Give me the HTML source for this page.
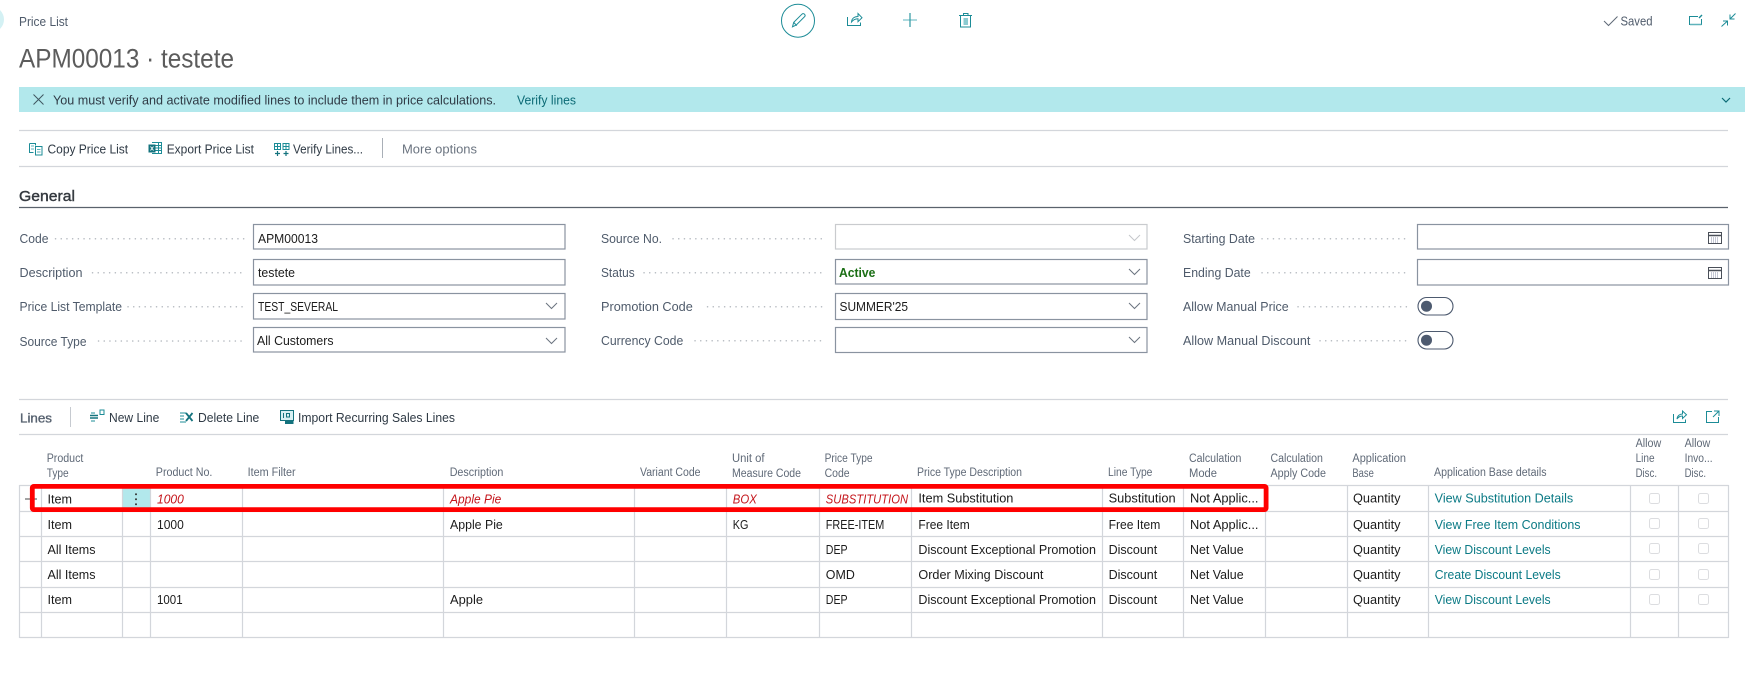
<!DOCTYPE html>
<html lang="en"><head><meta charset="utf-8"><title>Price List</title>
<style>
html,body{margin:0;padding:0;background:#fff;width:1745px;height:685px;overflow:hidden}
svg{display:block;font-family:"Liberation Sans",sans-serif}
text{font-size:12.5px;fill:#1c1c1c;white-space:pre}
.l{fill:#4f5b6b}.h{font-size:11.5px;fill:#5f6977}.a{fill:#2f3a45}.r{fill:#c4161c;font-style:italic}.k{fill:#0b7a85}
.dot{stroke:#b4b9bf;stroke-width:1.5;stroke-dasharray:.1 5.6;stroke-linecap:round;fill:none}
.ic{fill:none;stroke:#1c8c97;stroke-width:1}
.inp{fill:#fff;stroke:#8a93a0;stroke-width:1.2}
.ch{fill:none;stroke:#6b7480;stroke-width:1}
.cb{fill:#fff;stroke:#dcdde0;stroke-width:1}
</style></head><body>
<svg width="1745" height="685" viewBox="0 0 1745 685" xmlns="http://www.w3.org/2000/svg">
<circle cx="-9" cy="19.5" r="13" fill="#d4f1f4"/>
<text x="19" y="26" class="l" textLength="49" lengthAdjust="spacingAndGlyphs">Price List</text>
<text x="19" y="67.5" style="font-size:27px;fill:#5c5c5c" textLength="215" lengthAdjust="spacingAndGlyphs">APM00013 · testete</text>

<!-- top actions -->
<circle cx="798" cy="20.7" r="16.5" fill="none" stroke="#1c8c97" stroke-width="1"/>
<path class="ic" d="M792.5 26.8l1.2-4.4 8.2-8.2c.8-.8 1.9-.8 2.6 0s.8 1.9 0 2.6l-8.2 8.2zM793.7 22.4l3.1 3.2"/>
<path class="ic" d="M847.5 17v8.5h13v-3M851.5 22c.3-3.6 3-5.5 6.5-5.5v-3l4 4.2-4 4v-3c-2.8 0-4.8 1.1-6.5 3.3z"/>
<path fill="none" stroke="#8ccbd1" stroke-width="1.4" d="M903 20h14"/><path fill="none" stroke="#2f97a1" stroke-width="1.2" d="M910 13v14"/>
<path class="ic" d="M959 15.5h13M960.5 15.5v11.5h10v-11.500M963.5 15.5v-2h4.5v2"/><rect x="963.5" y="18" width="4.5" height="7" fill="#8ccbd1"/>
<path fill="none" stroke="#5f6977" stroke-width="1" d="M1604 21l4.5 4.5 9-9"/>
<text x="1620.5" y="25.5" class="l" textLength="32" lengthAdjust="spacingAndGlyphs">Saved</text>
<path class="ic" d="M1698 16.500h-8.500v8h12v-5.500"/><path fill="none" stroke="#5fb3bb" stroke-width="1.5" d="M1690 24.500h11.500"/><path fill="none" stroke="#1c8c97" stroke-width="1.4" d="M1699 18l3-3"/>
<path class="ic" d="M1721.5 26.5l6-5.5M1723 21h4.5v4.5M1735.5 13.5l-5.5 5.5M1730 14.5v4.5h4.5"/>

<!-- banner -->
<rect x="19" y="87" width="1726" height="25" fill="#b2e8ec"/>
<path fill="none" stroke="#3f5560" stroke-width="1" d="M33.5 94.5l10 10M43.5 94.5l-10 10"/>
<text x="53" y="104.5" class="a" textLength="443" lengthAdjust="spacingAndGlyphs">You must verify and activate modified lines to include them in price calculations.</text>
<text x="517" y="104.5" style="fill:#0b6a75" textLength="59" lengthAdjust="spacingAndGlyphs">Verify lines</text>
<path fill="none" stroke="#0b6a75" stroke-width="1.2" d="M1722 98l4 4 4-4"/>

<!-- action bar -->
<path d="M19 130.5H1728M19 166.5H1728" stroke="#d3d6db" stroke-width="1.2" fill="none"/>
<path class="ic" d="M29.5 143.5h6v2M29.500 143.5v9h4M35.5 146.500h6.500v8.500h-6.500z"/><path fill="none" stroke="#5fb3bb" d="M31 146h3M31 149h3M37 149.500h3.500M37 152h3.500"/>
<text x="47.5" y="153.5" class="a" textLength="80.6" lengthAdjust="spacingAndGlyphs">Copy Price List</text>
<rect x="148.5" y="144.5" width="7" height="8" fill="#14737e"/><path stroke="#fff" fill="none" stroke-width=".9" d="M150.5 146.5l3 4M153.5 146.5l-3 4"/>
<path class="ic" d="M152 142.5h9.5v11H152M155.5 145.5h6M155.5 148h6M155.5 150.5h6M158.5 142.5v11"/>
<text x="166.7" y="153.5" class="a" textLength="87.3" lengthAdjust="spacingAndGlyphs">Export Price List</text>
<path class="ic" d="M274.500 143.500h6v6h-6zM283 143.500h6v6h-6zM277.500 143.500v6M274.500 146.500h6M286 143.500v6M283 146.500h6"/>
<path fill="none" stroke="#14737e" stroke-width="1.200" d="M275 153.500h5M277.500 151v5M283.500 153.500h5M286 151v5"/>
<text x="293" y="153.5" class="a" textLength="70" lengthAdjust="spacingAndGlyphs">Verify Lines...</text>
<path d="M382.5 138v20" stroke="#a9afb7" stroke-width="1"/>
<text x="402" y="153.5" style="fill:#6b7480" textLength="75" lengthAdjust="spacingAndGlyphs">More options</text>

<!-- General -->
<text x="19" y="201" style="font-size:15px;fill:#33383e;stroke:#33383e;stroke-width:.4" textLength="56" lengthAdjust="spacingAndGlyphs">General</text>
<path d="M19 207.5H1728" stroke="#5a626c" stroke-width="1.2"/>

<rect class="inp" x="253.5" y="224.5" width="311.5" height="24.5"/>
<rect class="inp" x="253.5" y="259.5" width="311.5" height="25.5"/>
<rect class="inp" x="253.5" y="293.5" width="311.5" height="25.5"/>
<rect class="inp" x="253.5" y="327.5" width="311.5" height="24.5"/>
<text x="19.5" y="243" class="l" textLength="29" lengthAdjust="spacingAndGlyphs">Code</text>
<text x="19.5" y="277" class="l" textLength="63" lengthAdjust="spacingAndGlyphs">Description</text>
<text x="19.5" y="311" class="l" textLength="102.5" lengthAdjust="spacingAndGlyphs">Price List Template</text>
<text x="19.5" y="346" class="l" textLength="67" lengthAdjust="spacingAndGlyphs">Source Type</text>
<path class="dot" d="M55.5 238.7H245M92.5 272.7H245M128 306.7H245M98.5 341H245"/>
<text x="258" y="243" textLength="60" lengthAdjust="spacingAndGlyphs">APM00013</text>
<text x="258" y="277" textLength="37" lengthAdjust="spacingAndGlyphs">testete</text>
<text x="258" y="311" style="font-size:13px" textLength="80" lengthAdjust="spacingAndGlyphs">TEST_SEVERAL</text>
<text x="257" y="345" textLength="76.5" lengthAdjust="spacingAndGlyphs">All Customers</text>
<path class="ch" d="M546 303l5.500 5.500 5.500-5.500M546 338l5.500 5.500 5.500-5.500"/>

<rect x="835.5" y="224.5" width="311.5" height="24.5" fill="#fff" stroke="#c9cbce" stroke-width="1.2"/>
<rect class="inp" x="835.5" y="259.5" width="311.5" height="24.5"/>
<rect class="inp" x="835.5" y="293.5" width="311.5" height="26"/>
<rect class="inp" x="835.5" y="327.5" width="311.5" height="25"/>
<text x="601" y="243" class="l" textLength="61" lengthAdjust="spacingAndGlyphs">Source No.</text>
<text x="601" y="277" class="l" textLength="33.7" lengthAdjust="spacingAndGlyphs">Status</text>
<text x="601" y="311" class="l" textLength="91.8" lengthAdjust="spacingAndGlyphs">Promotion Code</text>
<text x="601" y="345" class="l" textLength="82.3" lengthAdjust="spacingAndGlyphs">Currency Code</text>
<path class="dot" d="M673 238.7H826M644 272.7H826M707.5 306.7H826M695 340.7H826"/>
<text x="839" y="277" style="font-weight:bold;fill:#1a6e14" textLength="36.4" lengthAdjust="spacingAndGlyphs">Active</text>
<text x="839.5" y="311" textLength="68.5" lengthAdjust="spacingAndGlyphs">SUMMER'25</text>
<path fill="none" stroke="#c4c7cb" d="M1129 235l5.500 5.500 5.500-5.500"/>
<path class="ch" d="M1129 269l5.500 5.500 5.500-5.500M1129 303l5.500 5.500 5.500-5.500M1129 337l5.500 5.500 5.500-5.500"/>

<rect class="inp" x="1417.5" y="224.5" width="311" height="24.5"/>
<rect class="inp" x="1417.5" y="259.5" width="311" height="25.5"/>
<text x="1183" y="243" class="l" textLength="72" lengthAdjust="spacingAndGlyphs">Starting Date</text>
<text x="1183" y="277" class="l" textLength="67.7" lengthAdjust="spacingAndGlyphs">Ending Date</text>
<text x="1183" y="311" class="l" textLength="105.6" lengthAdjust="spacingAndGlyphs">Allow Manual Price</text>
<text x="1183" y="345" class="l" textLength="127.4" lengthAdjust="spacingAndGlyphs">Allow Manual Discount</text>
<path class="dot" d="M1262 238.7H1408M1262 272.7H1408M1298 306.7H1408M1320 340.7H1408"/>
<rect x="1708.5" y="232.5" width="13" height="11" fill="#fff" stroke="#4a4f58"/><path d="M1708.5 235.5h13" stroke="#4a4f58" stroke-width="1.5"/><path d="M1711 238h8M1711 240h8M1711 242h8" stroke="#8a8fa8" stroke-width="1" stroke-dasharray="1 1"/>
<rect x="1708.5" y="267.5" width="13" height="11" fill="#fff" stroke="#4a4f58"/><path d="M1708.5 270.5h13" stroke="#4a4f58" stroke-width="1.5"/><path d="M1711 273h8M1711 275h8M1711 277h8" stroke="#8a8fa8" stroke-width="1" stroke-dasharray="1 1"/>
<rect x="1418" y="297.5" width="35" height="17.5" rx="8.75" fill="#fff" stroke="#4d5a6f" stroke-width="1.1"/><circle cx="1426.5" cy="306.2" r="5.500" fill="#4d5a6f"/>
<rect x="1418" y="331.5" width="35" height="17.5" rx="8.75" fill="#fff" stroke="#4d5a6f" stroke-width="1.1"/><circle cx="1426.5" cy="340.2" r="5.500" fill="#4d5a6f"/>

<!-- Lines toolbar -->
<path d="M19 399.5H1728M19 434.5H1728" stroke="#d3d6db" stroke-width="1.2" fill="none"/>
<text x="20" y="422.5" style="fill:#56616f;stroke:#56616f;stroke-width:.35" textLength="32" lengthAdjust="spacingAndGlyphs">Lines</text>
<path d="M70.5 407v20" stroke="#c6cad0"/>
<path fill="none" stroke="#14737e" stroke-width="1.6" d="M90 415.500h8M90 418h8"/><path class="ic" d="M91 413h4M91 421h4M100 410v4.500h4v-4.500z"/>
<text x="109" y="422" class="a" textLength="50.3" lengthAdjust="spacingAndGlyphs">New Line</text>
<path class="ic" d="M180 413h6M180 416h4M180 419h4M180 422h6"/><path fill="none" stroke="#14737e" stroke-width="1.8" d="M186 413l6.500 8M192.500 413l-6.500 8"/>
<text x="198" y="422" class="a" textLength="61.3" lengthAdjust="spacingAndGlyphs">Delete Line</text>
<rect x="280.5" y="410.5" width="13" height="10" fill="#d8f1f3" stroke="#14737e"/><path fill="#14737e" d="M285 420.500h8.500v3.500H285z"/><path fill="none" stroke="#14737e" d="M283.500 413v5M286.500 413.500h3v3.500h-3z"/>
<text x="298" y="422" class="a" textLength="157" lengthAdjust="spacingAndGlyphs">Import Recurring Sales Lines</text>
<path class="ic" d="M1673.5 414v8.5h12v-3M1677 419c.3-3.2 2.8-5 5.500-5v-3l4 3.800-4 3.700v-2.500c-2.300 0-4 .8-5.500 3z"/>
<path class="ic" d="M1712 411.500h-5.500v11h12V417M1714 411h5v5M1719 411l-6 6"/>

<!-- Table headers -->
<text class="h" x="46.7" y="462" textLength="36.7" lengthAdjust="spacingAndGlyphs">Product</text>
<text class="h" x="46.7" y="477" textLength="22" lengthAdjust="spacingAndGlyphs">Type</text>
<text class="h" x="155.8" y="476" textLength="56.6" lengthAdjust="spacingAndGlyphs">Product No.</text>
<text class="h" x="247.6" y="476" textLength="48" lengthAdjust="spacingAndGlyphs">Item Filter</text>
<text class="h" x="449.7" y="476" textLength="53.6" lengthAdjust="spacingAndGlyphs">Description</text>
<text class="h" x="640" y="476" textLength="60.5" lengthAdjust="spacingAndGlyphs">Variant Code</text>
<text class="h" x="732" y="462" textLength="32.5" lengthAdjust="spacingAndGlyphs">Unit of</text>
<text class="h" x="732" y="477" textLength="69" lengthAdjust="spacingAndGlyphs">Measure Code</text>
<text class="h" x="824.6" y="462" textLength="48" lengthAdjust="spacingAndGlyphs">Price Type</text>
<text class="h" x="824.6" y="477" textLength="25" lengthAdjust="spacingAndGlyphs">Code</text>
<text class="h" x="917" y="476" textLength="105" lengthAdjust="spacingAndGlyphs">Price Type Description</text>
<text class="h" x="1108" y="476" textLength="44.4" lengthAdjust="spacingAndGlyphs">Line Type</text>
<text class="h" x="1189" y="462" textLength="52.4" lengthAdjust="spacingAndGlyphs">Calculation</text>
<text class="h" x="1189" y="477" textLength="28" lengthAdjust="spacingAndGlyphs">Mode</text>
<text class="h" x="1270.5" y="462" textLength="52.4" lengthAdjust="spacingAndGlyphs">Calculation</text>
<text class="h" x="1270.5" y="477" textLength="55.5" lengthAdjust="spacingAndGlyphs">Apply Code</text>
<text class="h" x="1352.4" y="462" textLength="53.6" lengthAdjust="spacingAndGlyphs">Application</text>
<text class="h" x="1352.4" y="477" textLength="21.4" lengthAdjust="spacingAndGlyphs">Base</text>
<text class="h" x="1434" y="476" textLength="112.5" lengthAdjust="spacingAndGlyphs">Application Base details</text>
<text class="h" x="1635.6" y="447" textLength="25.6" lengthAdjust="spacingAndGlyphs">Allow</text>
<text class="h" x="1635.6" y="462" textLength="19" lengthAdjust="spacingAndGlyphs">Line</text>
<text class="h" x="1635.6" y="477" textLength="21.4" lengthAdjust="spacingAndGlyphs">Disc.</text>
<text class="h" x="1684.6" y="447" textLength="25.6" lengthAdjust="spacingAndGlyphs">Allow</text>
<text class="h" x="1684.6" y="462" textLength="28" lengthAdjust="spacingAndGlyphs">Invo...</text>
<text class="h" x="1684.6" y="477" textLength="21.4" lengthAdjust="spacingAndGlyphs">Disc.</text>

<!-- grid -->
<rect x="122.5" y="485.5" width="28" height="26" fill="#b2e8ec"/>
<path fill="none" stroke="#d3d6db" stroke-width="1.2" d="M19.5 485.5H1728.5M19.5 511.5H1728.5M19.5 536.5H1728.5M19.5 561.5H1728.5M19.5 587.5H1728.5M19.5 612.5H1728.5M19.5 637.5H1728.5M19.5 485V638M41.5 485V638M122.5 485V638M150.5 485V638M242.5 485V638M443.5 485V638M634.5 485V638M726.5 485V638M819.5 485V638M911.5 485V638M1102.5 485V638M1183.5 485V638M1265.5 485V638M1347.5 485V638M1428.5 485V638M1630.5 485V638M1678.5 485V638M1728.5 485V638"/>
<path d="M25 499h12" stroke="#666" stroke-width="1.2"/>
<circle cx="136" cy="494.3" r="1" fill="#333"/><circle cx="136" cy="499.3" r="1" fill="#333"/><circle cx="136" cy="504.3" r="1" fill="#333"/>

<!-- rows -->
<text x="47.5" y="503.5" textLength="24.5" lengthAdjust="spacingAndGlyphs">Item</text>
<text x="157" y="503.5" class="r" textLength="26.8" lengthAdjust="spacingAndGlyphs">1000</text>
<text x="450" y="503.5" class="r" textLength="51.3" lengthAdjust="spacingAndGlyphs">Apple Pie</text>
<text x="732.8" y="503.5" class="r" textLength="24" lengthAdjust="spacingAndGlyphs">BOX</text>
<text x="825.8" y="503.5" class="r" textLength="82.3" lengthAdjust="spacingAndGlyphs">SUBSTITUTION</text>
<text x="918.4" y="502.5" textLength="95" lengthAdjust="spacingAndGlyphs">Item Substitution</text>
<text x="1108.6" y="502.5" textLength="67" lengthAdjust="spacingAndGlyphs">Substitution</text>
<text x="1190" y="502.5" textLength="68.5" lengthAdjust="spacingAndGlyphs">Not Applic...</text>
<text x="1353" y="502.5" textLength="47.5" lengthAdjust="spacingAndGlyphs">Quantity</text>
<text x="1434.7" y="502.5" class="k" textLength="138.5" lengthAdjust="spacingAndGlyphs">View Substitution Details</text>

<text x="47.5" y="529" textLength="24.5" lengthAdjust="spacingAndGlyphs">Item</text>
<text x="157" y="529" textLength="26.8" lengthAdjust="spacingAndGlyphs">1000</text>
<text x="450" y="529" textLength="52.8" lengthAdjust="spacingAndGlyphs">Apple Pie</text>
<text x="732.8" y="529" textLength="15.7" lengthAdjust="spacingAndGlyphs">KG</text>
<text x="825.8" y="529" style="font-size:13px" textLength="58.5" lengthAdjust="spacingAndGlyphs">FREE-ITEM</text>
<text x="918.4" y="529" textLength="51.3" lengthAdjust="spacingAndGlyphs">Free Item</text>
<text x="1108.6" y="529" textLength="51.7" lengthAdjust="spacingAndGlyphs">Free Item</text>
<text x="1190" y="529" textLength="68.5" lengthAdjust="spacingAndGlyphs">Not Applic...</text>
<text x="1353" y="529" textLength="47.5" lengthAdjust="spacingAndGlyphs">Quantity</text>
<text x="1434.7" y="529" class="k" textLength="145.8" lengthAdjust="spacingAndGlyphs">View Free Item Conditions</text>

<text x="47.5" y="554" textLength="48" lengthAdjust="spacingAndGlyphs">All Items</text>
<text x="825.8" y="554" style="font-size:13px" textLength="21.8" lengthAdjust="spacingAndGlyphs">DEP</text>
<text x="918.4" y="554" textLength="177.6" lengthAdjust="spacingAndGlyphs">Discount Exceptional Promotion</text>
<text x="1108.6" y="554" textLength="48.6" lengthAdjust="spacingAndGlyphs">Discount</text>
<text x="1190" y="554" textLength="53.6" lengthAdjust="spacingAndGlyphs">Net Value</text>
<text x="1353" y="554" textLength="47.5" lengthAdjust="spacingAndGlyphs">Quantity</text>
<text x="1434.7" y="554" class="k" textLength="116" lengthAdjust="spacingAndGlyphs">View Discount Levels</text>

<text x="47.5" y="579" textLength="48" lengthAdjust="spacingAndGlyphs">All Items</text>
<text x="825.8" y="579" textLength="29" lengthAdjust="spacingAndGlyphs">OMD</text>
<text x="918.4" y="579" textLength="125" lengthAdjust="spacingAndGlyphs">Order Mixing Discount</text>
<text x="1108.6" y="579" textLength="48.6" lengthAdjust="spacingAndGlyphs">Discount</text>
<text x="1190" y="579" textLength="53.6" lengthAdjust="spacingAndGlyphs">Net Value</text>
<text x="1353" y="579" textLength="47.5" lengthAdjust="spacingAndGlyphs">Quantity</text>
<text x="1434.7" y="579" class="k" textLength="126" lengthAdjust="spacingAndGlyphs">Create Discount Levels</text>

<text x="47.5" y="604" textLength="24.5" lengthAdjust="spacingAndGlyphs">Item</text>
<text x="157" y="604" textLength="25.6" lengthAdjust="spacingAndGlyphs">1001</text>
<text x="450" y="604" textLength="33" lengthAdjust="spacingAndGlyphs">Apple</text>
<text x="825.8" y="604" style="font-size:13px" textLength="21.8" lengthAdjust="spacingAndGlyphs">DEP</text>
<text x="918.4" y="604" textLength="177.6" lengthAdjust="spacingAndGlyphs">Discount Exceptional Promotion</text>
<text x="1108.6" y="604" textLength="48.6" lengthAdjust="spacingAndGlyphs">Discount</text>
<text x="1190" y="604" textLength="53.6" lengthAdjust="spacingAndGlyphs">Net Value</text>
<text x="1353" y="604" textLength="47.5" lengthAdjust="spacingAndGlyphs">Quantity</text>
<text x="1434.7" y="604" class="k" textLength="116" lengthAdjust="spacingAndGlyphs">View Discount Levels</text>

<!-- checkboxes -->
<rect class="cb" x="1649.5" y="493.5" width="10" height="10" rx="2"/><rect class="cb" x="1698.5" y="493.5" width="10" height="10" rx="2"/>
<rect class="cb" x="1649.5" y="518.5" width="10" height="10" rx="2"/><rect class="cb" x="1698.5" y="518.5" width="10" height="10" rx="2"/>
<rect class="cb" x="1649.5" y="543.5" width="10" height="10" rx="2"/><rect class="cb" x="1698.5" y="543.5" width="10" height="10" rx="2"/>
<rect class="cb" x="1649.5" y="569.5" width="10" height="10" rx="2"/><rect class="cb" x="1698.5" y="569.5" width="10" height="10" rx="2"/>
<rect class="cb" x="1649.5" y="594.5" width="10" height="10" rx="2"/><rect class="cb" x="1698.5" y="594.5" width="10" height="10" rx="2"/>

<!-- highlight -->
<rect x="32.3" y="486.4" width="1233.8" height="23.2" rx="1.5" fill="none" stroke="#ff0000" stroke-width="4.8"/>
</svg>
</body></html>
